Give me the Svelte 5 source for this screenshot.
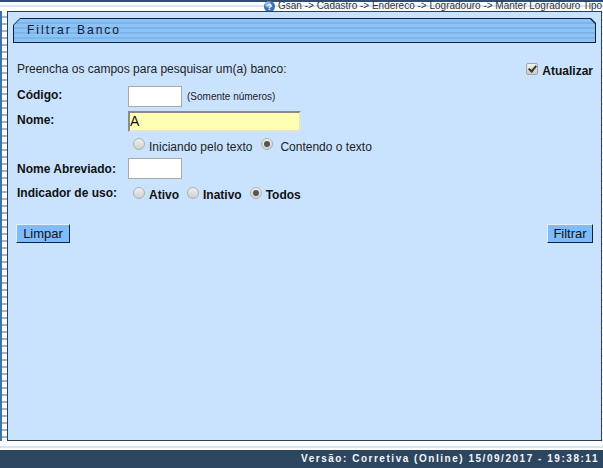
<script>
  let nome = $state("A");
  let codigo = $state("");
  let abreviado = $state("");
  let tipo = $state("contendo");
  let uso = $state("todos");
  let atualizar = $state(true);
</script>

<div class="page">
  <div class="top">
    <svg class="help" width="11" height="11" viewBox="0 0 11 11">
      <circle cx="5.5" cy="5.5" r="5.5" fill="#3a72b4" />
      <circle cx="4" cy="3.5" r="3" fill="#8fb6e2" />
      <text x="5.5" y="8.6" text-anchor="middle" class="q">?</text>
    </svg>
    <span class="crumbs">Gsan -&gt; Cadastro -&gt; Endereco -&gt; Logradouro -&gt; Manter Logradouro Tipo</span>
  </div>

  <div class="middle">
    <div class="rail"></div>
    <main class="panel">
      <div class="title-border">
        <div class="title">Filtrar Banco</div>
      </div>

      <div class="intro">
        <span>Preencha os campos para pesquisar um(a) banco:</span>
        <label class="refresh">
          <input type="checkbox" bind:checked={atualizar} />
          <b>Atualizar</b>
        </label>
      </div>

      <div class="form">
        <div class="row r-codigo">
          <b class="label">Código:</b>
          <input class="field short" bind:value={codigo} />
          <small>(Somente números)</small>
        </div>
        <div class="row r-nome">
          <b class="label">Nome:</b>
          <input class="field long" bind:value={nome} />
        </div>
        <div class="row r-tipo">
          <span class="label"></span>
          <label class="opt"><input type="radio" bind:group={tipo} value="iniciando" />Iniciando pelo texto</label>
          <label class="opt second"><input type="radio" bind:group={tipo} value="contendo" />Contendo o texto</label>
        </div>
        <div class="row r-abrev">
          <b class="label">Nome Abreviado:</b>
          <input class="field short" bind:value={abreviado} />
        </div>
        <div class="row r-uso">
          <b class="label">Indicador de uso:</b>
          <label class="opt bold"><input type="radio" bind:group={uso} value="ativo" />Ativo</label>
          <label class="opt bold"><input type="radio" bind:group={uso} value="inativo" />Inativo</label>
          <label class="opt bold"><input type="radio" bind:group={uso} value="todos" />Todos</label>
        </div>
      </div>

      <div class="actions">
        <button type="button">Limpar</button>
        <button type="button">Filtrar</button>
      </div>
    </main>
  </div>

  <footer class="footer">Versão: Corretiva (Online) 15/09/2017 - 19:38:11</footer>
</div>

<style>
  :global(body) {
    margin: 0;
    overflow: hidden;
  }
  .page {
    width: 603px;
    height: 468px;
    display: flex;
    flex-direction: column;
    font-family: "Liberation Sans", Arial, sans-serif;
    font-size: 12px;
    color: #111;
    background: repeating-linear-gradient(to bottom, #fff 0 5px, #d5e7f7 5px 7px);
  }
  .top {
    height: 9px;
    border-top: 2px solid #2f4d70;
    display: flex;
    justify-content: flex-end;
    gap: 3px;
    white-space: nowrap;
  }
  .help {
    flex: none;
    margin-top: -1px;
  }
  .q {
    font-size: 9px;
    font-weight: bold;
    fill: #fff;
  }
  .crumbs {
    font-size: 10px;
    line-height: 10px;
    color: #333;
    width: 325px;
    flex: none;
    margin-top: -1px;
    overflow: hidden;
  }
  .middle {
    flex: 1;
    display: flex;
    min-height: 0;
    padding-bottom: 9px;
  }
  .rail {
    width: 5px;
    border-left: 2px solid #3b74ad;
    background: repeating-linear-gradient(to bottom, #fff 0 5px, #9fb4c8 5px 7px);
  }
  .panel {
    flex: none;
    width: 595px;
    box-sizing: border-box;
    border: 1px solid #2b3f55;
    background: #c9e3ff;
    padding: 6px 5px 0 5px;
    display: flex;
    flex-direction: column;
  }
  .title-border {
    height: 25px;
    background: #10233a;
    padding: 1px;
    box-sizing: border-box;
    clip-path: polygon(7px 0, calc(100% - 5px) 0, 100% 5px, 100% 100%, 0 100%, 0 7px);
  }
  .title {
    height: 100%;
    padding-left: 13px;
    line-height: 23px;
    font-size: 12px;
    letter-spacing: 2px;
    color: #0d2038;
    background: repeating-linear-gradient(to bottom, #8ec3f5 0 3px, #7db4ea 3px 5px);
    clip-path: polygon(6px 0, calc(100% - 5px) 0, 100% 5px, 100% 100%, 0 100%, 0 6px);
  }
  .intro {
    display: flex;
    justify-content: space-between;
    align-items: center;
    padding: 18px 0 0 4px;
    height: 19px;
    font-size: 12px;
    color: #222;
  }
  .intro > span {
    margin-top: -3px;
  }
  .refresh {
    display: flex;
    align-items: center;
    gap: 4px;
    color: #111;
    padding-right: 3px;
  }
  .refresh input {
    appearance: none;
    position: relative;
    margin: -3px 0 0;
    width: 12px;
    height: 12px;
    box-sizing: border-box;
    border: 1px solid #a5a5a5;
    border-radius: 2px;
    background: linear-gradient(#f2f2f2, #c9c9c9);
  }
  .refresh input:checked::after {
    content: "";
    position: absolute;
    left: 3px;
    top: 0;
    width: 3px;
    height: 6px;
    border: solid #333;
    border-width: 0 2px 2px 0;
    transform: rotate(40deg);
  }
  .form {
    padding: 3px 0 0 4px;
  }
  .row {
    display: flex;
    align-items: center;
  }
  .label {
    width: 111px;
    flex: none;
  }
  .r-codigo {
    height: 26px;
  }
  .r-codigo .label {
    margin-top: -2px;
  }
  .r-nome {
    height: 24px;
  }
  .r-nome .label {
    margin-top: -2px;
  }
  .r-tipo {
    height: 23px;
    padding-top: 4px;
    box-sizing: border-box;
  }
  .r-abrev {
    height: 24px;
  }
  .r-abrev .label {
    margin-top: 1px;
  }
  .r-uso {
    height: 27px;
  }
  .r-uso .label {
    margin-top: -2px;
  }
  .field {
    box-sizing: border-box;
    height: 21px;
    padding: 1px 2px;
    font: 14px "Liberation Sans", Arial, sans-serif;
    border: 1px solid #a9a9a9;
    background: #fff;
    outline: none;
    color: #111;
  }
  .short {
    width: 54px;
  }
  .long {
    width: 173px;
    background: #ffffb4;
    border: 2px solid #dfe8c8;
    border-top-color: #8a8a8a;
    border-left-color: #8a8a8a;
    padding: 0;
  }
  small {
    font-size: 10px;
    margin-left: 5px;
    color: #222;
    padding-top: 1px;
  }
  .opt {
    display: flex;
    align-items: center;
    gap: 4px;
    margin-right: 4px;
    color: #222;
  }
  .opt input {
    appearance: none;
    position: relative;
    box-sizing: border-box;
    margin: 0 0 5px 5px;
    width: 12px;
    height: 12px;
    border: 1px solid #b0b0b0;
    border-radius: 50%;
    background: linear-gradient(#efefef, #cfcfcf);
  }
  .opt input:checked::after {
    content: "";
    position: absolute;
    left: 2px;
    top: 2px;
    width: 6px;
    height: 6px;
    border-radius: 50%;
    background: #555;
  }
  .second input {
    margin-right: 3px;
  }
  .bold {
    font-weight: bold;
    color: #111;
  }
  .r-uso .opt {
    padding-top: 3px;
    margin-right: 3px;
  }
  .actions {
    display: flex;
    justify-content: space-between;
    margin-top: 17px;
    padding: 0 3px 0 3px;
  }
  button {
    height: 19px;
    padding: 0;
    width: 54px;
    font: 13px "Liberation Sans", Arial, sans-serif;
    color: #111;
    background: #7fbcfb;
    border: 1px solid;
    border-color: #e6f0fa #10233a #10233a #e6f0fa;
    box-sizing: border-box;
  }
  button:last-child {
    width: 46px;
  }
  .footer {
    height: 18px;
    line-height: 18px;
    background: #2d4660;
    color: #f2f6fa;
    font-size: 10px;
    font-weight: bold;
    letter-spacing: 1.53px;
    text-align: right;
    padding-right: 4px;
    box-sizing: border-box;
    white-space: nowrap;
  }
</style>
